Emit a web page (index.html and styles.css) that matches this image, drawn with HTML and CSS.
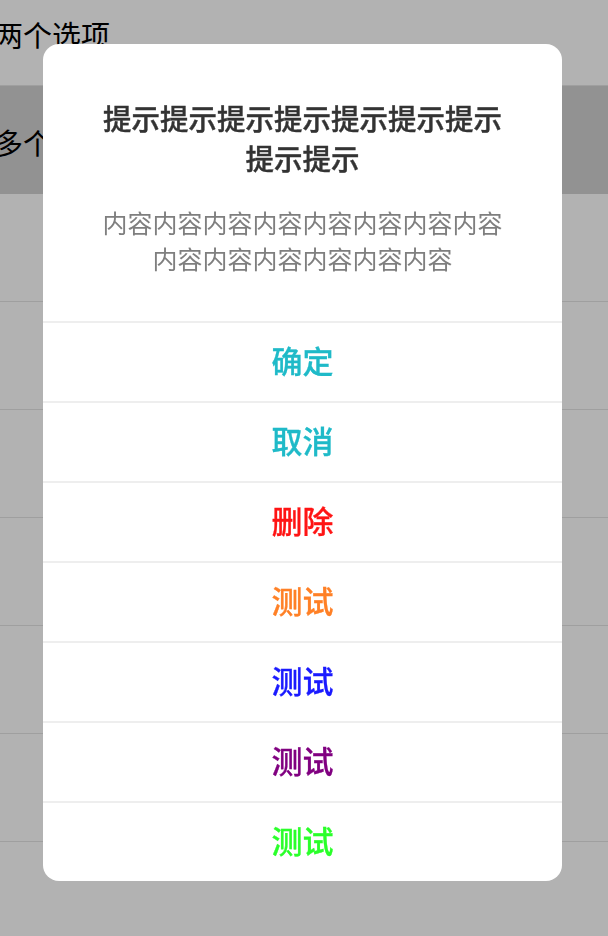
FILE: index.html
```html
<!DOCTYPE html>
<html lang="zh-CN">
<head>
<meta charset="utf-8">
<title>Dialog</title>
<link rel="stylesheet" href="styles.css">
</head>
<body>
<div class="list">
  <div class="row"><span class="row-text">两个选项</span></div>
  <div class="row row-active"><span class="row-text">多个选项</span></div>
  <div class="row"></div>
  <div class="row"></div>
  <div class="row"></div>
  <div class="row"></div>
  <div class="row"></div>
  <div class="row"></div>
  <div class="row"></div>
</div>
<div class="mask">
  <div class="dialog">
    <div class="dialog-head">
      <div class="dialog-title">提示提示提示提示提示提示提示提示提示</div>
      <div class="dialog-content">内容内容内容内容内容内容内容内容内容内容内容内容内容内容</div>
    </div>
    <div class="dialog-btn btn-teal">确定</div>
    <div class="dialog-btn btn-teal">取消</div>
    <div class="dialog-btn btn-red">删除</div>
    <div class="dialog-btn btn-orange">测试</div>
    <div class="dialog-btn btn-blue">测试</div>
    <div class="dialog-btn btn-purple">测试</div>
    <div class="dialog-btn btn-green">测试</div>
  </div>
</div>
</body>
</html>
```
FILE: styles.css
```css
* { box-sizing: border-box; }
html, body {
  margin: 0;
  padding: 0;
  width: 608px;
  height: 936px;
  overflow: hidden;
  background: #ffffff;
  font-family: "Noto Sans CJK SC", "Noto Sans", sans-serif;
}
.list {
  margin-top: -22px;
  display: flex;
  flex-direction: column;
}
.row {
  height: 108px;
  border-bottom: 1px solid #e4e4e4;
  display: flex;
  align-items: center;
  padding-top: 4px;
  background: #ffffff;
}
.row-active {
  background: #d2d2d2;
  border-bottom-color: #d2d2d2;
}
.row-text {
  font-size: 29px;
  color: #000;
  margin-left: -6px;
  white-space: nowrap;
}
.mask {
  position: fixed;
  inset: 0;
  background: rgba(0, 0, 0, 0.3);
  display: flex;
  align-items: flex-start;
  padding: 44px 0 0 43px;
}
.dialog {
  width: 519px;
  background: #ffffff;
  border-radius: 16px;
  overflow: hidden;
  display: flex;
  flex-direction: column;
}
.dialog-head {
  padding: 54px 48px 45px;
  text-align: center;
  display: flex;
  flex-direction: column;
  gap: 26px;
}
.dialog-title {
  font-size: 28.5px;
  line-height: 40px;
  font-weight: 500;
  color: #333333;
  padding: 0 8px;
  -webkit-text-stroke: 0.4px #333333;
}
.dialog-content {
  font-size: 25px;
  line-height: 36px;
  color: #7f7f7f;
}
.dialog-btn {
  height: 80px;
  border-top: 2px solid #eeeeee;
  display: flex;
  align-items: center;
  justify-content: center;
  padding-bottom: 6px;
  font-size: 31px;
  font-weight: 500;
  -webkit-text-stroke: 0.3px currentColor;
}
.btn-teal { color: #1fbac8; }
.btn-red { color: #ff1414; }
.btn-orange { color: #ff8026; }
.btn-blue { color: #1a1aff; }
.btn-purple { color: #800080; }
.btn-green { color: #2aff2a; }
```
